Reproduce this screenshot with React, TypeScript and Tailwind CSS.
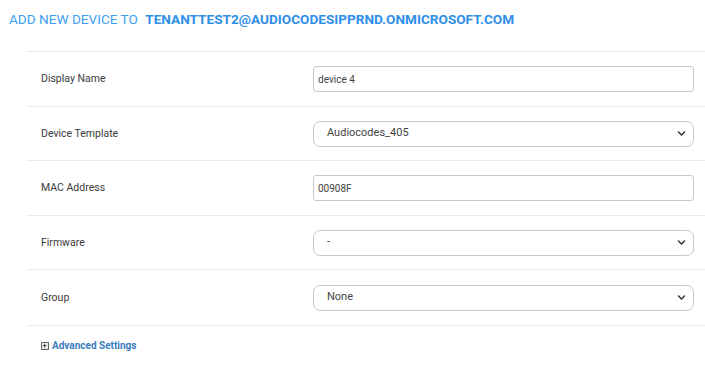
import { FaChevronDown } from "react-icons/fa";

const rows = [
  { label: "Display Name", kind: "input", value: "device 4", h: "h-[55px]" },
  { label: "Device Template", kind: "select", value: "Audiocodes_405", h: "h-[54px]" },
  { label: "MAC Address", kind: "input", value: "00908F", h: "h-[55px]" },
  { label: "Firmware", kind: "select", value: "-", h: "h-[54px]" },
  { label: "Group", kind: "select", value: "None", h: "h-[56px]" },
];

const App = () => {
  return (
    <div className="w-[705px] h-[368px] bg-white font-['Roboto',sans-serif] overflow-hidden">
      <h2 className="pl-[9px] pt-[10px] h-[51px] text-[13.6px] leading-[18px] text-[#3d9ef3] uppercase">
        Add new device to{" "}
        <span className="ml-[4px] font-bold text-[#2e8ee8]">tenanttest2@audiocodesipprnd.onmicrosoft.com</span>
      </h2>

      <div className="ml-[27px]">
        {rows.map((row) => (
          <div
            key={row.label}
            className={`flex items-center ${row.h} border-t border-[#ebebeb] pl-[14px] pr-[11px]`}
          >
            <div className="flex-1 text-[10.5px] text-[#3a3a3a]">{row.label}</div>
            {row.kind === "input" ? (
              <div className="w-[381px] h-[26px] flex items-center pl-[4px] border border-[#c8c8c8] rounded-[3px] text-[10px] text-[#444]">
                {row.value}
              </div>
            ) : (
              <div className="w-[381px] h-[26px] flex items-center justify-between pl-[13px] pr-[7px] border border-[#c8c8c8] rounded-[7px] text-[11px] text-[#444]">
                <span>{row.value}</span>
                <FaChevronDown className="w-[9px] h-[9px] text-[#333]" />
              </div>
            )}
          </div>
        ))}
        <div className="flex items-center h-[40px] border-t border-[#ebebeb] pl-[14px]">
          <span className="w-[8px] h-[8px] border border-[#666] bg-[#eee] flex items-center justify-center mr-[3px]">
            <svg viewBox="0 0 8 8" className="w-[6px] h-[6px]">
              <path d="M1 3.5h5M3.5 1v5" stroke="#222" strokeWidth="1" />
            </svg>
          </span>
          <span className="text-[10px] font-bold text-[#3a7cc0]">Advanced Settings</span>
        </div>
      </div>
    </div>
  );
};

export default App;
